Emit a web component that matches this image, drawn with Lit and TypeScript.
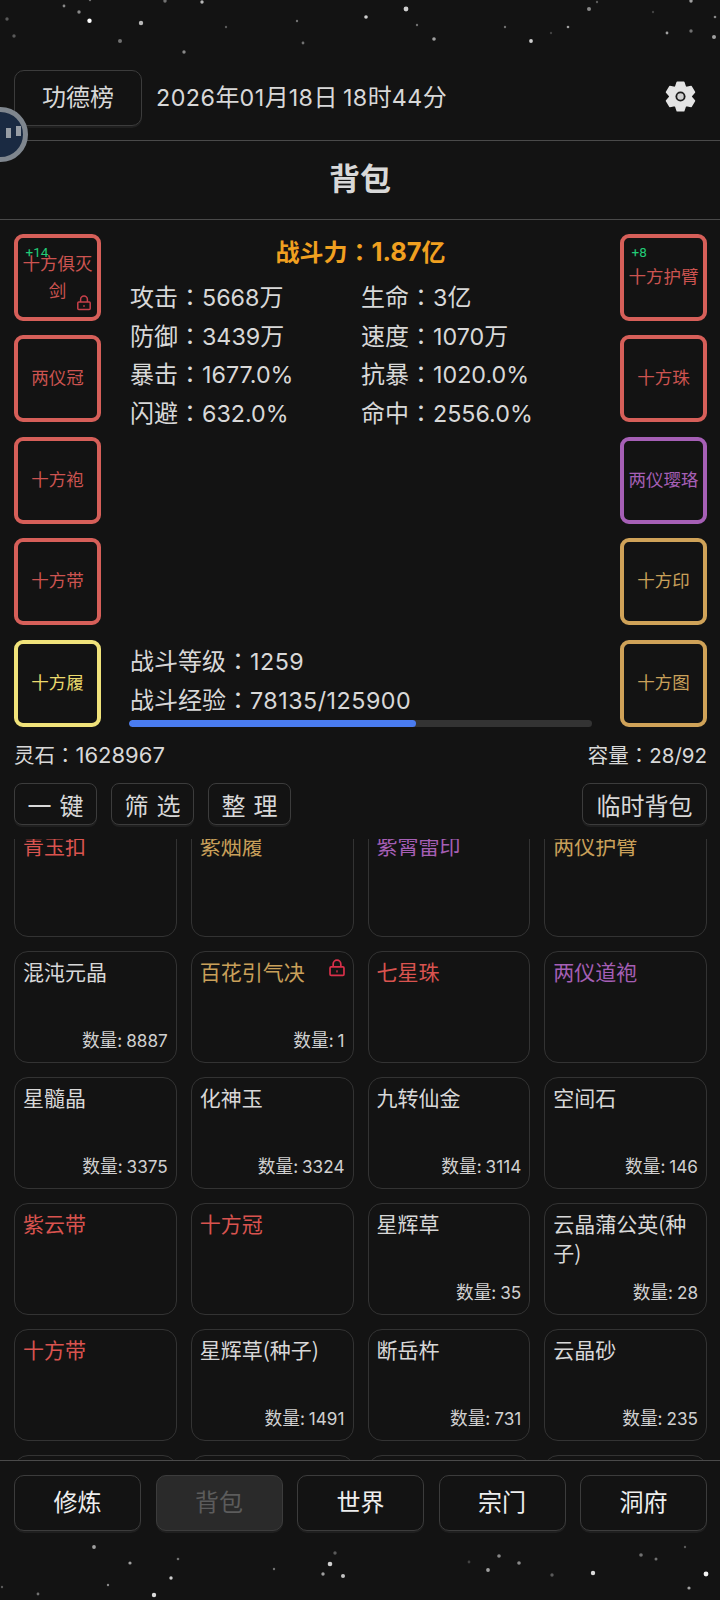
import { LitElement, html, css, svg } from "lit";
import { customElement } from "lit/decorators.js";

type Item = { n: string; c?: string; q?: number; lock?: boolean };
const items: Item[] = [
  { n: "青玉扣", c: "red" }, { n: "紫烟履", c: "gold" }, { n: "紫霄雷印", c: "purple" }, { n: "两仪护臂", c: "gold" },
  { n: "混沌元晶", q: 8887 }, { n: "百花引气决", c: "gold", q: 1, lock: true }, { n: "七星珠", c: "red" }, { n: "两仪道袍", c: "purple" },
  { n: "星髓晶", q: 3375 }, { n: "化神玉", q: 3324 }, { n: "九转仙金", q: 3114 }, { n: "空间石", q: 146 },
  { n: "紫云带", c: "red" }, { n: "十方冠", c: "red" }, { n: "星辉草", q: 35 }, { n: "云晶蒲公英(种子)", q: 28 },
  { n: "十方带", c: "red" }, { n: "星辉草(种子)", q: 1491 }, { n: "断岳杵", q: 731 }, { n: "云晶砂", q: 235 },
  { n: "" }, { n: "" }, { n: "" }, { n: "" },
];

const topStars: number[][] = [[89.5,20.7,2.2,1],[141,23,2.2,.7],[79,12,1.7,.5],[64,6,1.4,.5],[7,19,1.7,.3],[14,36,1.7,.3],[120,41,2,.4],[184,52,1.7,.5],[165,1,1.7,.4],[202,2,1.7,.7],[90,0,1.2,.4],[226,27,1.2,.3],[297,21,1.2,.4],[303,43,1.4,.4],[366,17,1.8,.8],[406,9,2.4,.8],[417,25,1.2,.4],[434,39,1.8,.6],[505,27,1.2,.4],[531,41,1.9,.8],[568,27,1.3,.6],[589,9,2,.5],[551,33,1.2,.2],[597,2,1.2,.3],[653,12,1.2,.2],[667,33,1.4,.6],[691,31,1.7,.4],[714,37,2,.6],[691,1,1.7,.6],[715,17,1.3,.5]];
const botStars: number[][] = [[94,1547,1.9,.6],[130,1563,1.6,.6],[178,1559,1.3,.4],[171,1578,1.7,.8],[154,1595,2.2,.85],[108,1585,1.2,.5],[38,1594,1.4,.4],[2,1587,1.2,.3],[335,1553,1.7,.3],[330,1564,2.3,.8],[323,1574,1.7,.6],[343,1576,2,.75],[274,1569,1.2,.4],[499,1556,1.8,.5],[519,1563,1.8,.5],[488,1570,1.9,.6],[552,1575,1.7,.3],[593,1573,2.2,.85],[641,1555,1.8,.4],[656,1559,1.5,.4],[685,1547,1.2,.3],[706,1574,2.4,.95],[689,1588,1.6,.6],[469,1562,1.4,.2]];

const lock = (cls: string) => html`<svg class=${cls} viewBox="0 0 16 16" fill="none" stroke="currentColor" stroke-width="1.5"><rect x="1.8" y="7" width="12.4" height="7.6" rx="1"/><path d="M4.6 7V4.4a3.4 3.4 0 0 1 6.8 0V7"/><path d="M8 10v2" stroke-width="1.2"/></svg>`;

const t = (s: string) => s.split(/([0-9.,%/]+|：)/).map(p =>
  p === "：" ? html`<span class="c">：</span>` : /^[0-9.,%/]+$/.test(p) ? html`<span class="n">${p}</span>` : p);

const gearPath = (() => {
  const pts: string[] = [];
  for (let k = 0; k < 6; k++) {
    const a = -90 + k * 60;
    const seq: [number, number][] = [[-27, 8.3], [-13, 11.3], [13, 11.3], [27, 8.3]];
    for (const [d, r] of seq) {
      const rad = ((a + d) * Math.PI) / 180;
      pts.push(`${(12 + r * Math.cos(rad)).toFixed(2)} ${(12 + r * Math.sin(rad)).toFixed(2)}`);
    }
  }
  return "M" + pts.join("L") + "Z";
})();

@customElement("app-root")
export class AppRoot extends LitElement {
  static styles = css`
    :host { display: block; width: 720px; height: 1600px; background: #131313; position: relative; overflow: hidden;
      font-family: "Noto Sans CJK SC", "Noto Sans", sans-serif; color: #d8d8d8; }
    .n { font-family: Inter, Roboto, sans-serif; font-size: 0.97em; line-height: 0; }
    .c { font-family: "Noto Sans CJK TC", sans-serif; line-height: 0; }
    .stars { position: absolute; left: 0; top: 0; width: 720px; height: 1600px; pointer-events: none; filter: blur(0.4px); }
    .page { position: relative; display: flex; flex-direction: column; height: 1600px; }
    .top { height: 141px; box-sizing: border-box; padding: 70px 13px 15px 14px; display: flex; align-items: center; gap: 14px; border-bottom: 1px solid #4a4a4a; flex: none; }
    .btn { box-sizing: border-box; border: 1.5px solid #3c3c3c; border-radius: 8px; background: #131313; color: #d8d8d8; display: flex; align-items: center; justify-content: center; box-shadow: 0 2px 0 #1f1f1f; }
    .rank { width: 128px; height: 56px; font-size: 24px; border-radius: 10px; padding-bottom: 4px; }
    .date { font-size: 24px; flex: 1; white-space: pre; padding-bottom: 4px; }
    .date .n { letter-spacing: 0.5px; }
    .gear { width: 31px; height: 31px; color: #e4e4e4; margin: -3px 11px 0 0; flex: none; }
    .title { height: 79px; flex: none; display: flex; align-items: center; justify-content: center; font-size: 31px; font-weight: 700; border-bottom: 1px solid #4a4a4a; box-sizing: border-box; padding-bottom: 8px; }
    .equip { flex: none; box-sizing: border-box; height: 507px; padding: 14px 13px 0 14px; display: flex; justify-content: space-between; }
    .col { display: flex; flex-direction: column; gap: 14.4px; width: 87px; }
    .slot { box-sizing: border-box; width: 87px; height: 87px; border: 4px solid; border-radius: 9px; position: relative; display: flex; align-items: center; justify-content: center; text-align: center; font-size: 17.5px; line-height: 27px; padding: 0 2px 4px; }
    .plus { position: absolute; left: 7.5px; top: 4.5px; font-size: 13.5px; line-height: 18px; color: #22cc77; font-family: Roboto, sans-serif; }
    .slock { position: absolute; right: 5.5px; bottom: 6px; width: 16px; height: 16px; color: #c8404a; }
    .slot.red { border-color: #d65f59; color: #cc5350; }
    .slot.purple { border-color: #a55fb5; color: #a55fb5; }
    .slot.gold { border-color: #cfa258; color: #c9a05a; }
    .slot.yellow { border-color: #f0e27a; color: #ead96c; }
    .mid { flex: 1; padding: 0 28px 0 28px; display: flex; flex-direction: column; min-width: 0; }
    .power { text-align: center; font-size: 24px; line-height: 36px; font-weight: 700; color: #f0a020; margin-top: -1px; }
    .power .n { font-size: 25.5px; }
    .stats { display: grid; grid-template-columns: 231px 1fr; font-size: 24px; line-height: 38.7px; margin: 8px 0 0 1px; }
    .spacer { flex: 1; }
    .lv { font-size: 24px; line-height: 39px; margin-left: 1px; }
    .lv .n { letter-spacing: 0.5px; }
    .bar { height: 7px; border-radius: 4px; background: #333; overflow: hidden; flex: none; margin-top: 2px; }
    .fill { height: 100%; background: #4a7cf0; border-radius: 4px; }
    .info { flex: none; display: flex; justify-content: space-between; padding: 0 13px 0 14px; font-size: 20.5px; line-height: 30px; margin-top: 12px; }
    .info .n { font-size: 22px; }
    .info .cap .n { font-size: 20.5px; }
    .actions { flex: none; display: flex; gap: 14px; padding: 0 13px 0 14px; margin-top: 14px; height: 42px; }
    .actions .btn { width: 83px; font-size: 24px; white-space: pre; word-spacing: 2.6px; }
    .actions .temp { width: 125px; margin-left: auto; }
    .scroll { flex: 1; min-height: 0; overflow: hidden; margin-top: 14px; padding: 0 13px 0 14px; border-bottom: 1px solid #4a4a4a; }
    .grid { display: grid; grid-template-columns: repeat(4, 1fr); gap: 14px; margin-top: -14px; }
    .cell { box-sizing: border-box; height: 112px; border: 1.5px solid #333; border-radius: 14px; position: relative; padding: 5px 7px 5px 8px; font-size: 21px; line-height: 29px; color: #d8d8d8; }
    .cell.red { color: #d9534f; } .cell.gold { color: #c9a05a; } .cell.purple { color: #a55fb5; }
    .qty { position: absolute; right: 8px; bottom: 10px; font-size: 17.7px; line-height: 26px; color: #d0d0d0; }
    .clock { position: absolute; right: 7px; top: 6.5px; width: 18px; height: 18px; color: #d9304a; }
    .nav { flex: none; height: 139px; box-sizing: border-box; padding: 14px 13px 0 14px; display: flex; justify-content: space-between; }
    .nav .btn { width: 127px; height: 56px; font-size: 24px; border-radius: 10px; color: #eee; padding-bottom: 6px; }
    .nav .off { background: #2a2a2a; color: #5c5c5c; }
    .float { position: absolute; left: -27px; top: 107px; width: 55px; height: 55px; box-sizing: border-box; border-radius: 50%; border: 5px solid #7f868e; background: #1a2a42; }
    .float i { position: absolute; width: 5px; height: 10px; background: #979da5; }
    .b1 { left: 28px; top: 16px; } .b2 { left: 38px; top: 14px; }
  `;

  render() {
    const left = [["十方俱灭剑","red","+14",true],["两仪冠","red"],["十方袍","red"],["十方带","red"],["十方履","yellow"]] as any[];
    const right = [["十方护臂","red","+8"],["十方珠","red"],["两仪璎珞","purple"],["十方印","gold"],["十方图","gold"]] as any[];
    const stats = [["攻击","5668万"],["生命","3亿"],["防御","3439万"],["速度","1070万"],["暴击","1677.0%"],["抗暴","1020.0%"],["闪避","632.0%"],["命中","2556.0%"]];
    const slot = (s: any[]) => html`<div class="slot ${s[1]}">${s[2] ? html`<span class="plus">${s[2]}</span>` : ""}<span>${s[0]}</span>${s[3] ? lock("slock") : ""}</div>`;
    return html`
      <svg class="stars" viewBox="0 0 720 1600">
        ${[...topStars, ...botStars].map(s => svg`<circle cx=${s[0]} cy=${s[1]} r=${s[2]} fill="#fff" opacity=${s[3]}/>`)}
      </svg>
      <div class="page">
        <div class="top">
          <div class="btn rank">功德榜</div>
          <div class="date">${t("2026年01月18日 18时44分")}</div>
          <svg class="gear" viewBox="0 0 24 24"><path d=${gearPath} fill="currentColor" stroke="currentColor" stroke-width="1.2" stroke-linejoin="round"/><circle cx="12" cy="12" r="3.9" fill="#1c1c1c"/><circle cx="12" cy="12" r="2.5" fill="#d0d0d0"/></svg>
        </div>
        <div class="title">背包</div>
        <div class="equip">
          <div class="col">${left.map(slot)}</div>
          <div class="mid">
            <div class="power">${t("战斗力：1.87亿")}</div>
            <div class="stats">${stats.map(s => html`<div>${t(s[0] + "：" + s[1])}</div>`)}</div>
            <div class="spacer"></div>
            <div class="lv">${t("战斗等级：1259")}</div>
            <div class="lv">${t("战斗经验：78135/125900")}</div>
            <div class="bar"><div class="fill" style="width:${(78135 / 125900) * 100}%"></div></div>
          </div>
          <div class="col">${right.map(slot)}</div>
        </div>
        <div class="info"><span>${t("灵石：1628967")}</span><span class="cap">${t("容量：28/92")}</span></div>
        <div class="actions">
          <div class="btn">一 键</div><div class="btn">筛 选</div><div class="btn">整 理</div>
          <div class="btn temp">临时背包</div>
        </div>
        <div class="scroll"><div class="grid">
          ${items.map(i => html`<div class="cell ${i.c || ""}">${i.n}${i.lock ? lock("clock") : ""}${i.q !== undefined ? html`<span class="qty">数量: <span class="n">${i.q}</span></span>` : ""}</div>`)}
        </div></div>
        <div class="nav">
          ${["修炼","背包","世界","宗门","洞府"].map((n, k) => html`<div class="btn ${k === 1 ? "off" : ""}">${n}</div>`)}
        </div>
      </div>
      <div class="float"><i class="b1"></i><i class="b2"></i></div>
    `;
  }
}
